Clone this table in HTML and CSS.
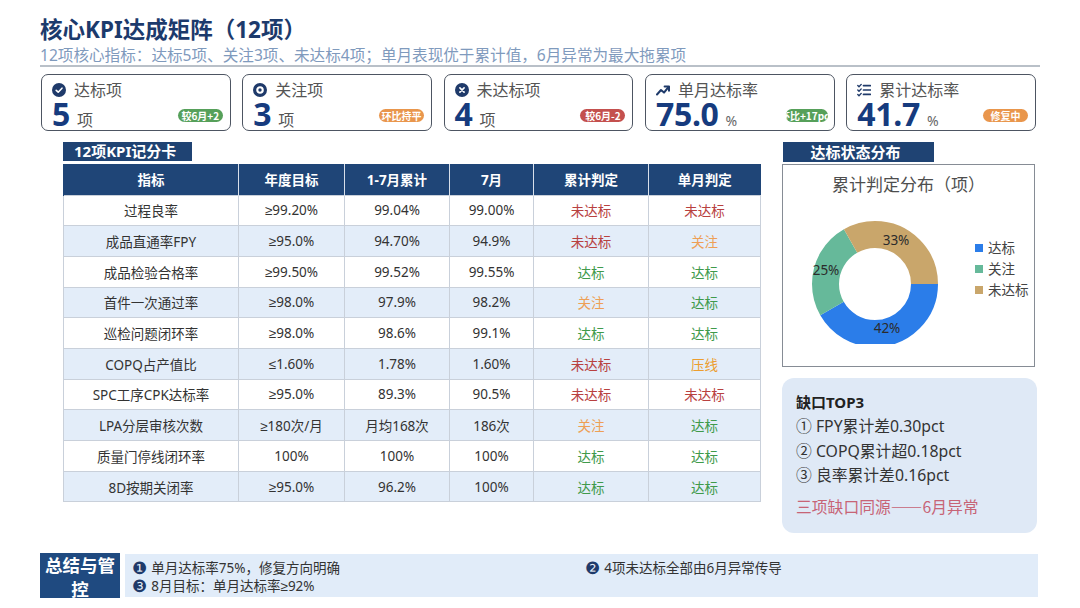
FILE: index.html
```html
<!DOCTYPE html>
<html lang="zh-CN">
<head>
<meta charset="utf-8">
<title>核心KPI达成矩阵</title>
<link rel="stylesheet" href="styles.css">
</head>
<body>
<div class="page">
  <header class="head">
    <h1 class="title">核心KPI达成矩阵（12项）</h1>
    <p class="sub">12项核心指标：达标5项、关注3项、未达标4项；单月表现优于累计值，6月异常为最大拖累项</p>
  </header>

  <section class="cards">
    <div class="card">
      <div class="card-top">
        <svg class="ico" viewBox="0 0 14 14"><circle cx="7" cy="7" r="7" fill="#1f3a6a"/><path d="M4.2 7.3l2 1.9 3.8-4" fill="none" stroke="#fff" stroke-width="1.6" stroke-linecap="round" stroke-linejoin="round"/></svg>
        <span>达标项</span>
      </div>
      <div class="card-bottom">
        <span class="num">5</span><span class="unit">项</span>
        <span class="badge green">较6月+2</span>
      </div>
    </div>
    <div class="card">
      <div class="card-top">
        <svg class="ico" viewBox="0 0 14 14"><circle cx="7" cy="7" r="5.4" fill="none" stroke="#1f3a6a" stroke-width="3.2"/><circle cx="7" cy="7" r="1.7" fill="#1f3a6a"/></svg>
        <span>关注项</span>
      </div>
      <div class="card-bottom">
        <span class="num">3</span><span class="unit">项</span>
        <span class="badge orange">环比持平</span>
      </div>
    </div>
    <div class="card">
      <div class="card-top">
        <svg class="ico" viewBox="0 0 14 14"><circle cx="7" cy="7" r="7" fill="#1f3a6a"/><path d="M4.9 4.9l4.2 4.2M9.1 4.9l-4.2 4.2" fill="none" stroke="#fff" stroke-width="1.6" stroke-linecap="round"/></svg>
        <span>未达标项</span>
      </div>
      <div class="card-bottom">
        <span class="num">4</span><span class="unit">项</span>
        <span class="badge red">较6月-2</span>
      </div>
    </div>
    <div class="card">
      <div class="card-top">
        <svg class="ico" viewBox="0 0 14 14"><path d="M1 11.5L5 7l3 2.6L12.5 4" fill="none" stroke="#1f3a6a" stroke-width="2" stroke-linecap="round" stroke-linejoin="round"/><path d="M8.6 3.4H13v4.4" fill="none" stroke="#1f3a6a" stroke-width="2" stroke-linecap="round" stroke-linejoin="round"/></svg>
        <span>单月达标率</span>
      </div>
      <div class="card-bottom">
        <span class="num">75.0</span><span class="unit pct">%</span>
        <span class="badge green clip"><span>环比+17pct</span></span>
      </div>
    </div>
    <div class="card">
      <div class="card-top">
        <svg class="ico" viewBox="0 0 14 14"><path d="M0.8 2.6l1.2 1.2 2.2-2.4M0.8 7.1l1.2 1.2 2.2-2.4M0.8 11.6l1.2 1.2 2.2-2.4" fill="none" stroke="#1f3a6a" stroke-width="1.4" stroke-linecap="round" stroke-linejoin="round"/><path d="M6.5 2.6H13.4M6.5 7H13.4M6.5 11.4H13.4" stroke="#1f3a6a" stroke-width="1.7" stroke-linecap="round"/></svg>
        <span>累计达标率</span>
      </div>
      <div class="card-bottom">
        <span class="num">41.7</span><span class="unit pct">%</span>
        <span class="badge orange">修复中</span>
      </div>
    </div>
  </section>

  <main class="main">
    <div class="left">
      <div class="tag tag-left">12项KPI记分卡</div>
      <table class="kpi">
        <colgroup>
          <col class="c1"><col class="c2"><col class="c3"><col class="c4"><col class="c5"><col class="c6">
        </colgroup>
        <thead>
          <tr><th>指标</th><th>年度目标</th><th>1-7月累计</th><th>7月</th><th>累计判定</th><th>单月判定</th></tr>
        </thead>
        <tbody>
          <tr><td>过程良率</td><td>≥99.20%</td><td>99.04%</td><td>99.00%</td><td class="bad">未达标</td><td class="bad">未达标</td></tr>
          <tr><td>成品直通率FPY</td><td>≥95.0%</td><td>94.70%</td><td>94.9%</td><td class="bad">未达标</td><td class="warn">关注</td></tr>
          <tr><td>成品检验合格率</td><td>≥99.50%</td><td>99.52%</td><td>99.55%</td><td class="ok">达标</td><td class="ok">达标</td></tr>
          <tr><td>首件一次通过率</td><td>≥98.0%</td><td>97.9%</td><td>98.2%</td><td class="warn">关注</td><td class="ok">达标</td></tr>
          <tr><td>巡检问题闭环率</td><td>≥98.0%</td><td>98.6%</td><td>99.1%</td><td class="ok">达标</td><td class="ok">达标</td></tr>
          <tr><td>COPQ占产值比</td><td>≤1.60%</td><td>1.78%</td><td>1.60%</td><td class="bad">未达标</td><td class="press">压线</td></tr>
          <tr><td>SPC工序CPK达标率</td><td>≥95.0%</td><td>89.3%</td><td>90.5%</td><td class="bad">未达标</td><td class="bad">未达标</td></tr>
          <tr><td>LPA分层审核次数</td><td>≥180次/月</td><td>月均168次</td><td>186次</td><td class="warn">关注</td><td class="ok">达标</td></tr>
          <tr><td>质量门停线闭环率</td><td>100%</td><td>100%</td><td>100%</td><td class="ok">达标</td><td class="ok">达标</td></tr>
          <tr><td>8D按期关闭率</td><td>≥95.0%</td><td>96.2%</td><td>100%</td><td class="ok">达标</td><td class="ok">达标</td></tr>
        </tbody>
      </table>
    </div>

    <div class="right">
      <div class="tag tag-right">达标状态分布</div>
      <div class="chart">
        <div class="chart-title">累计判定分布（项）</div>
        <div class="chart-body">
          <svg class="donut" width="150" height="140" viewBox="0 0 150 140">
            <g transform="translate(75 80)">
              <circle r="49.5" fill="none" stroke="#2b7de9" stroke-width="27" stroke-dasharray="129.6 400" stroke-dashoffset="0"/>
              <circle r="49.5" fill="none" stroke="#66b99a" stroke-width="27" stroke-dasharray="77.75 400" stroke-dashoffset="-129.6"/>
              <circle r="49.5" fill="none" stroke="#c9a66b" stroke-width="27" stroke-dasharray="103.7 400" stroke-dashoffset="-207.35"/>
            </g>
            <text x="96" y="41" class="lbl">33%</text>
            <text x="26" y="71" class="lbl">25%</text>
            <text x="87" y="129" class="lbl">42%</text>
          </svg>
          <ul class="legend">
            <li><i class="sw sw-blue"></i>达标</li>
            <li><i class="sw sw-teal"></i>关注</li>
            <li><i class="sw sw-tan"></i>未达标</li>
          </ul>
        </div>
      </div>
      <div class="top3">
        <div class="top3-title">缺口TOP3</div>
        <div class="top3-item">① FPY累计差0.30pct</div>
        <div class="top3-item">② COPQ累计超0.18pct</div>
        <div class="top3-item">③ 良率累计差0.16pct</div>
        <div class="top3-note">三项缺口同源——6月异常</div>
      </div>
    </div>
  </main>

  <footer class="summary">
    <div class="sum-tag">总结与管控</div>
    <div class="sum-bar">
      <div class="sum-item"><span class="dg">❶</span>单月达标率75%，修复方向明确</div>
      <div class="sum-item"><span class="dg">❷</span>4项未达标全部由6月异常传导</div>
      <div class="sum-item"><span class="dg">❸</span>8月目标：单月达标率≥92%</div>
    </div>
  </footer>
</div>
</body>
</html>
```

FILE: styles.css
```css
* { box-sizing: border-box; }

html, body {
  margin: 0;
  padding: 0;
  background: #ffffff;
}

body {
  font-family: "Noto Sans", "Liberation Sans", "Noto Sans CJK SC", sans-serif;
  color: #333;
  width: 1080px;
  height: 608px;
  overflow: hidden;
}

.page {
  padding: 16px 40px 0 40px;
}

/* header */
.head {
  border-bottom: 2px solid #b9c0c8;
}
.title {
  margin: 0;
  font-size: 22.5px;
  line-height: 28px;
  font-weight: 700;
  color: #1c3a6c;
}
.sub {
  margin: 2px 0 0 0;
  font-size: 15.6px;
  line-height: 19px;
  color: #7f9abd;
  white-space: nowrap;
}

/* cards */
.cards {
  margin: 7px 4px 0 1px;
  display: grid;
  grid-template-columns: repeat(5, 1fr);
  column-gap: 11.5px;
}
.card {
  height: 57px;
  border: 1.5px solid #4d5562;
  border-radius: 7px;
  padding: 6px 7px 0 10px;
  display: flex;
  flex-direction: column;
}
.card-top {
  display: flex;
  align-items: center;
  gap: 8px;
  font-size: 16px;
  line-height: 18px;
  height: 18px;
  color: #555;
}
.ico {
  width: 14px;
  height: 14px;
  flex: none;
}
.card-bottom {
  display: flex;
  align-items: baseline;
  height: 30px;
}
.num {
  font-size: 32px;
  line-height: 30px;
  font-weight: 700;
  color: #163b7e;
  letter-spacing: -0.3px;
}
.unit {
  font-size: 16px;
  line-height: 20px;
  color: #555;
  margin-left: 7px;
}
.unit.pct {
  font-size: 14px;
  margin-left: 7px;
  color: #666;
}
.badge {
  margin-left: auto;
  align-self: center;
  height: 13px;
  width: 45px;
  margin-top: 2px;
  border-radius: 7px;
  font-family: "Noto Sans CJK SC", sans-serif;
  font-size: 10px;
  line-height: 13px;
  font-weight: 700;
  color: #fff;
  display: flex;
  justify-content: center;
  white-space: nowrap;
  overflow: hidden;
}
.badge.clip {
  width: 42px;
  margin-right: -1px;
  border-radius: 6px 7px 7px 6px;
}
.badge.green { background: #56a05a; }
.badge.orange { background: #e9964c; }
.badge.red { background: #c4504e; }

/* main */
.main {
  margin: 11px 0 0 23px;
  display: grid;
  grid-template-columns: 697px 255px;
  column-gap: 22px;
  align-items: start;
}

.tag {
  background: #1f4373;
  color: #fff;
  font-weight: 700;
  font-size: 15px;
  line-height: 19px;
  height: 19px;
}
.tag-left {
  width: 129px;
  padding-left: 11px;
}
.tag-right {
  width: 151px;
  margin-left: 1px;
  text-align: center;
  padding-right: 6px;
  height: 20px;
  line-height: 20px;
}

/* table */
.kpi {
  margin-top: 3px;
  width: 697px;
  border-collapse: collapse;
  table-layout: fixed;
  font-size: 13.5px;
}
.c1 { width: 175px; }
.c2 { width: 106px; }
.c3 { width: 105px; }
.c4 { width: 84px; }
.c5 { width: 115px; }
.c6 { width: 112px; }

.kpi th {
  background: #1f4577;
  color: #fff;
  font-weight: 700;
  height: 31px;
  padding: 0;
  border-left: 1px solid #d7dfea;
  text-align: center;
}
.kpi th:first-child { border-left: 1px solid #1f4577; }
.kpi td {
  height: 30.7px;
  padding: 0;
  text-align: center;
  color: #333;
  border: 1px solid #c9d0da;
  white-space: nowrap;
}
.kpi tbody tr:nth-child(even) td { background: #e3edf9; }
.kpi td.bad { color: #b8413f; }
.kpi td.warn { color: #ee9f55; }
.kpi td.ok { color: #3f9a4b; }
.kpi td.press { color: #ec9d2e; }

/* chart */
.chart {
  margin-top: 2px;
  width: 253px;
  height: 203px;
  border: 1px solid #868c95;
  padding-top: 9px;
}
.chart-title {
  text-align: center;
  font-size: 17px;
  line-height: 22px;
  color: #4e4e4e;
}
.chart-body {
  display: flex;
  align-items: center;
  margin-top: 8px;
}
.donut {
  margin-left: 17px;
  flex: none;
}
.lbl {
  font-size: 13.5px;
  fill: #2b2b2b;
  text-anchor: middle;
  font-family: "Noto Sans", "Noto Sans CJK SC", sans-serif;
}
.legend {
  list-style: none;
  margin: 0 0 10px 25px;
  padding: 0;
  font-size: 13.5px;
  line-height: 21px;
  color: #444;
}
.legend li {
  display: flex;
  align-items: center;
}
.sw {
  width: 8px;
  height: 8px;
  margin-right: 5px;
  display: inline-block;
}
.sw-blue { background: #2b7de9; }
.sw-teal { background: #66b99a; }
.sw-tan { background: #c9a66b; }

/* top3 */
.top3 {
  margin-top: 11px;
  height: 155px;
  background: #dfe9f6;
  border-radius: 12px;
  padding: 12px 14px;
}
.top3-title {
  font-size: 15px;
  line-height: 24px;
  font-weight: 700;
  color: #222;
}
.top3-item {
  font-size: 15.8px;
  line-height: 24.5px;
  color: #333;
  white-space: nowrap;
}
.top3-note {
  margin-top: 7px;
  font-family: "Noto Sans CJK SC", sans-serif;
  font-size: 15.8px;
  line-height: 24px;
  color: #c76476;
}

/* summary */
.summary {
  margin-top: 20px;
  display: grid;
  grid-template-columns: 80px 913px;
  column-gap: 5px;
}
.sum-tag {
  height: 45px;
  overflow: hidden;
  background: #1f4a80;
  color: #fff;
  font-weight: 700;
  font-size: 17.5px;
  line-height: 24px;
  text-align: center;
  padding: 0 1px;
}
.sum-bar {
  margin-top: 1px;
  height: 43px;
  background: #e1ecf9;
  padding: 5px 7px;
  display: grid;
  grid-template-columns: 453px 1fr;
  font-size: 13.5px;
  line-height: 18px;
  color: #333;
}
.sum-item {
  display: flex;
  align-items: center;
  white-space: nowrap;
}
.dg {
  font-family: "DejaVu Sans", sans-serif;
  color: #1f3a6a;
  font-size: 17px;
  line-height: 18px;
  margin-right: 4px;
}
```
